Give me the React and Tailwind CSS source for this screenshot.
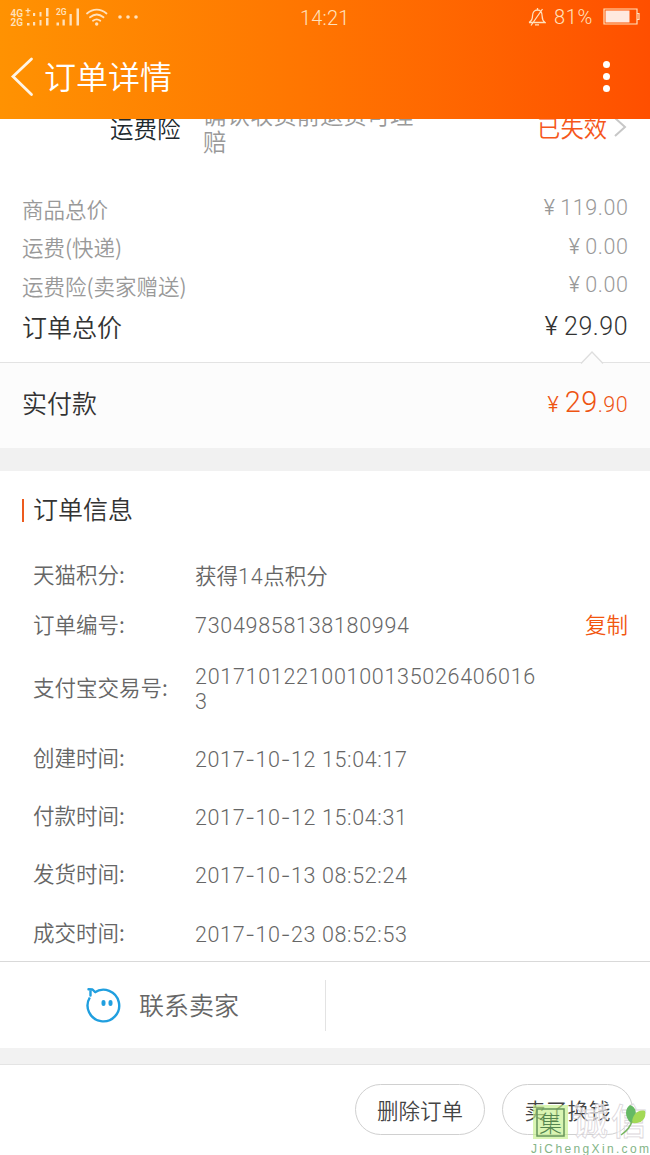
import React from "react";

const CJK = "font-['Noto_Sans_CJK_SC',sans-serif] font-[350]";
const NUM = "font-['Roboto','Noto_Sans_CJK_SC',sans-serif] font-[350]";
const YEN = "font-['Inter',sans-serif] tracking-normal";

function StatusBar() {
  return (
    <div className="flex h-[34px] items-center text-[#ffe1bd]">
      <svg className="ml-[9px] h-[20px] w-[130px] shrink-0 overflow-visible" viewBox="9 6 130 20" fill="currentColor">
        <g fontFamily="Roboto, sans-serif" fontWeight="600">
          <text x="10.5" y="15.5" fontSize="10">4G</text>
          <text x="10.5" y="25" fontSize="10">2G</text>
          <text x="56" y="14.300" fontSize="8.5">2G</text>
        </g>
        <path d="M25.500 9h5v1.200h-5zM27.300 7.300h1.300v5h-1.300zM26.500 13.500h3v1.200h-3zM27 22h2.500v2.500h-2.500zM33 12h2.200v3h-2.200zM33 21h2.200v3.500h-2.200zM39.500 11h2v4.500h-2zM39.500 19h2v5.500h-2zM46 7h2.500v8.500H46zM46 17h2.500v7.500H46zM56.500 21.500h2.500v3h-2.500zM62.500 18.500h2.300v6h-2.300zM69.500 13h2.300v11.500h-2.300zM76.500 7.500h2.500v17h-2.500z" />
        <g fill="none" stroke="currentColor" strokeWidth="1.800" strokeLinecap="round">
          <path d="M87 12.500c6-5.300 13.500-5.300 19.500 0M90 16.300c4.200-3.500 9.300-3.500 13.500 0M93 19.800c2.300-1.800 5-1.800 7.300 0" />
        </g>
        <circle cx="96.700" cy="23" r="1.700" />
        <circle cx="120" cy="16" r="1.800" />
        <circle cx="128" cy="16" r="1.800" />
        <circle cx="136" cy="16" r="1.800" />
      </svg>
      <span className={`${NUM} ml-[161px] w-[60px] pt-[2px] text-[20px] leading-none tracking-[0.2px]`}>14:21</span>
      <svg className="ml-[168px] h-[20px] w-[18px] shrink-0" viewBox="0 0 18 20" fill="none" stroke="currentColor" strokeWidth="1.300">
        <path d="M1 15.500h16c-2-1.500-2.800-3-2.800-6C14.200 5.500 12.500 3 9.500 3S4.500 5.500 4.500 9c0 3-1 5-3.500 6.500M7 17.800h4M9.500 3V1M14.500 2 3 18.500" />
      </svg>
      <span className={`${NUM} ml-[8px] w-[44px] text-[20px] leading-none tracking-[0.7px]`}>81%</span>
      <svg className="ml-[5px] -mt-[2px] h-[17px] w-[37px] shrink-0" viewBox="0 0 37 17">
        <path d="M1 1h33v15H1z M34 5.500h2v6h-2" fill="none" stroke="#ffe1bd" strokeWidth="1.200" />
        <path d="M2.500 2.500h24v12h-24z" fill="#ffe9df" />
      </svg>
    </div>
  );
}

function Header() {
  return (
    <header className="relative z-10 h-[119px] bg-linear-to-r from-[#ff9202] to-[#ff4f00]">
      <StatusBar />
      <div className="flex h-[85px] items-center text-white">
        <svg className="ml-[10px] h-[42px] w-[25px]" viewBox="0 0 25 42" fill="none" stroke="#fff5e6" strokeWidth="2.800" strokeLinecap="round">
          <path d="M21.500 3 3 20.500 21.500 38.500" />
        </svg>
        <h1 className={`${CJK} ml-[9px] flex-1 pb-[3px] text-[32px] leading-none`}>订单详情</h1>
        <div className="mr-[40px] flex flex-col gap-[5px] pb-px">
          <i className="size-[7px] rounded-full bg-white" />
          <i className="size-[7px] rounded-full bg-white" />
          <i className="size-[7px] rounded-full bg-white" />
        </div>
      </div>
    </header>
  );
}

function Insurance() {
  return (
    <div className={`${CJK} -mt-[16px] flex h-[86px] items-start leading-none`}>
      <span className="ml-[110px] mt-[14px] w-[93px] text-[23.500px] text-[#20292d]">运费险</span>
      <p className="-mt-[2px] w-[215px] text-[23.400px] leading-[27px] text-[#999]">确认收货前退货可理赔</p>
      <span className="ml-auto mt-[13px] text-[23.300px] text-[#f5571b]">已失效</span>
      <svg className="ml-[6px] mr-[22px] mt-[13px] h-[22px] w-[15px]" viewBox="0 0 15 22" fill="none" stroke="#c7c7c7" strokeWidth="2">
        <path d="m2 2 10 9L2 20" />
      </svg>
    </div>
  );
}

function PriceRow({ label, value }) {
  return (
    <div className="flex h-[38.500px] items-center justify-between px-[22px] leading-none text-[#999]">
      <span className={`${CJK} text-[21.500px]`}>{label}</span>
      <span className={`${NUM} -mr-[0.500px] pb-px text-[21.500px] tracking-[0.6px]`}><span className={`${YEN} mr-[5px]`}>¥</span>{value}</span>
    </div>
  );
}

function InfoRow({ label, children, height, action }) {
  return (
    <div className={`flex items-center pl-[33px] pr-[22px] text-[21.500px] text-[#666] ${height}`}>
      <span className={`${CJK} w-[162px] shrink-0 pb-[3px] leading-none`}>{label}</span>
      <span className={`${NUM} w-[345px] leading-[25px] break-all tracking-[0.7px]`}>{children}</span>
      {action && <span className={`${CJK} ml-auto pb-[3px] leading-none text-[#f2560f]`}>{action}</span>}
    </div>
  );
}

function DateTime({ value }) {
  return (
    <span className="relative top-px tracking-[0.62px]">
      {value.split("-").map((part, i) => (
        <React.Fragment key={i}>
          {i > 0 && <span className="font-['Inter',sans-serif]">-</span>}
          {part}
        </React.Fragment>
      ))}
    </span>
  );
}

function Watermark() {
  return (
    <svg className="absolute left-[525px] top-[38px] h-[54px] w-[125px] overflow-visible" viewBox="0 0 125 54">
      <rect x="8" y="2" width="35" height="34" fill="#c5ef8b" opacity=".65" />
      <rect x="12" y="6" width="27" height="27" fill="none" stroke="#65945c" strokeWidth="1.500" />
      <text x="14" y="28.500" fontSize="23" fill="#55854f" fontWeight="300" fontFamily="Noto Sans CJK SC, sans-serif">集</text>
      <text x="47" y="32" fontSize="36" fill="#fff" fillOpacity=".6" stroke="#dad5da" strokeWidth=".8" fontFamily="Noto Sans CJK SC, sans-serif" fontWeight="500" textLength="75">诚信</text>
      <path d="M106 20c-7-6-6-15-1-18 6 2 8 9 3 16z" fill="#65b964" />
      <path d="M107 20c0-8 6-14 13-12 2 8-4 13-13 12z" fill="#a3d956" />
      <path d="M107 18q-2 8-11 14" fill="none" stroke="#76b661" strokeWidth="1.500" />
      <text x="6" y="49.500" fontSize="12" fill="#84b587" fontFamily="Liberation Sans, Arial, sans-serif" textLength="118">JiChengXin.com</text>
    </svg>
  );
}

const times = [
  ["创建时间:", "2017-10-12 15:04:17"],
  ["付款时间:", "2017-10-12 15:04:31"],
  ["发货时间:", "2017-10-13 08:52:24"],
  ["成交时间:", "2017-10-23 08:52:53"],
];

export default function App() {
  return (
    <div className="h-[1155px] w-[650px] overflow-hidden bg-white">
      <Header />
      <Insurance />
      <section className="flex h-[173px] flex-col">
        <PriceRow label="商品总价" value="119.00" />
        <PriceRow label="运费(快递)" value="0.00" />
        <PriceRow label="运费险(卖家赠送)" value="0.00" />
        <div className="flex h-[43px] items-center justify-between px-[22px] leading-none text-[#333]">
          <span className={`${CJK} text-[25px]`}>订单总价</span>
          <span className={`${NUM} text-[25px] tracking-[0.5px]`}><span className={`${YEN} mr-[6px]`}>¥</span>29.90</span>
        </div>
      </section>
      <section className="relative flex h-[86px] items-center justify-between border-t border-[#e3e3e3] bg-[#fcfcfc] px-[22px] pb-[7px] leading-none">
        <svg className="absolute -top-[13px] right-[45px] h-[14px] w-[26px]" viewBox="0 0 26 14">
          <path d="M2 13.500 13 2l11 11.500" fill="#fcfcfc" stroke="#dedede" strokeWidth="1.300" />
        </svg>
        <span className={`${CJK} text-[25px] text-[#333]`}>实付款</span>
        <span className={`${NUM} text-[21.500px] tracking-[0.4px] text-[#ee5412]`}>
          <span className={`${YEN} mr-[6px]`}>¥</span><span className="text-[29px]">29</span>.90
        </span>
      </section>
      <div className="h-[23px] bg-[#f1f1f1]" />
      <section className="h-[490px]">
        <div className="flex h-[78px] items-center pl-[22px]">
          <i className="h-[23px] w-[2px] bg-[#ed5b1e]" />
          <h2 className={`${CJK} ml-[9px] pb-[4px] text-[25px] leading-none text-[#333]`}>订单信息</h2>
        </div>
        <InfoRow label="天猫积分:" height="h-[53px]">
          <span className={`${CJK} tracking-normal`}>获得</span>14<span className={`${CJK} tracking-normal`}>点积分</span>
        </InfoRow>
        <InfoRow label="订单编号:" height="h-[47px]" action="复制">73049858138180994</InfoRow>
        <InfoRow label="支付宝交易号:" height="h-[79px]">2017101221001001350264060163</InfoRow>
        <div className="h-px" />
        {times.map(([label, value]) => (
          <InfoRow key={label} label={label} height="h-[58.300px]"><DateTime value={value} /></InfoRow>
        ))}
      </section>
      <section className="flex h-[87px] items-center border-t border-[#d9d9d9]">
        <div className="flex h-[51px] w-[326px] items-center border-r border-[#e3e3e3]">
          <svg className="ml-[86px] h-[36px] w-[36px]" viewBox="0 0 36 36" fill="none" stroke="#209fdf" strokeWidth="2.400">
            <path d="M3.800 10.500A15.800 15.800 0 1 0 8.500 5.500" />
            <path d="M2.500 2.300 6.500 2.500 9 5M4.500 3v5.500" strokeLinejoin="round" strokeLinecap="round" />
            <path d="M17.500 15v2M24.500 15v2" strokeWidth="4" strokeLinecap="round" />
          </svg>
          <span className={`${CJK} ml-[17px] pb-px text-[25px] leading-none text-[#666]`}>联系卖家</span>
        </div>
      </section>
      <div className="h-[17px] border-b border-[#e4e4e4] bg-[#f2f2f2]" />
      <footer className={`${CJK} relative flex h-[90px] items-center justify-end gap-[17px] pb-px pr-[17px] text-[21.500px] leading-none text-[#444]`}>
        <button className="h-[51px] w-[130px] rounded-full border border-[#d0d0d0]">删除订单</button>
        <button className="h-[51px] w-[131px] rounded-full border border-[#d0d0d0]">卖了换钱</button>
        <Watermark />
      </footer>
    </div>
  );
}
